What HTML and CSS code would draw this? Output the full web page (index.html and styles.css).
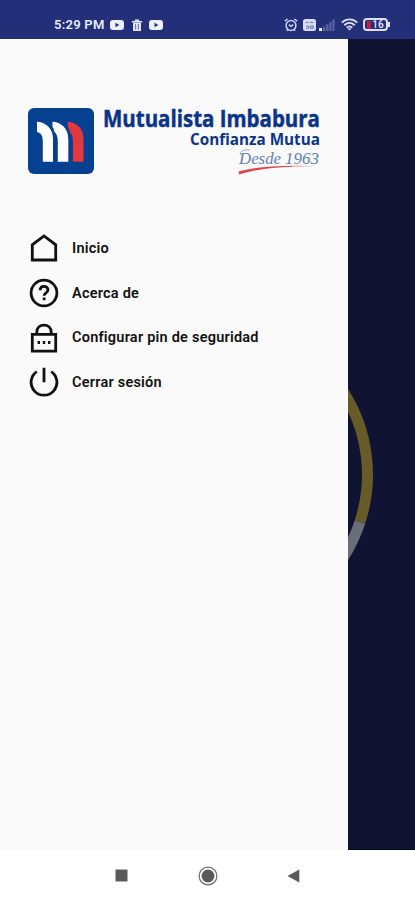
FILE: index.html
```html
<!DOCTYPE html>
<html lang="es">
	<head>
		<meta charset="utf-8">
		<meta name="viewport" content="width=device-width, initial-scale=1">
		<title>Mutualista Imbabura</title>
		<link rel="stylesheet" href="styles.css">
	</head>
	<body>
		<header class="status-bar">
			<div class="status-left">
				<span class="clock">5:29 PM</span>
				<svg class="video" width="14" height="12" viewBox="0 0 14 12">
					<rect x="0" y="1" width="14" height="10" rx="3" fill="#eef0ff"/>
					<path d="M5.5 3.8v4.4L9.3 6z" fill="#232f79"/>
				</svg>
				<svg class="trash" width="12" height="12" viewBox="0 0 12 12">
					<path d="M.8 2h3V.5h4.4V2h3v1.6H.8z" fill="#dfe3f8"/>
					<path d="M2 3.6h8V12H2z" fill="#dfe3f8"/>
					<path d="M4.6 5v5.5M7.4 5v5.5" stroke="#5c669f" stroke-width=".9"/>
				</svg>
				<svg class="video" width="14" height="12" viewBox="0 0 14 12">
					<rect x="0" y="1" width="14" height="10" rx="3" fill="#eef0ff"/>
					<path d="M5.5 3.8v4.4L9.3 6z" fill="#232f79"/>
				</svg>
			</div>
			<div class="status-right">
				<svg width="14" height="14" viewBox="0 0 14 14" fill="none" stroke="#cdd3f2" stroke-width="1.5">
					<circle cx="7" cy="7.5" r="4.9"/>
					<path d="M.8 3.2L3.6 1M13.2 3.2L10.4 1M2.8 12.8l1-1.2M11.2 12.8l-1-1.2"/>
					<path d="M4.8 6.6L7 8.4l2.3-1.8"/>
				</svg>
				<svg class="volte" width="13" height="12" viewBox="0 0 13 12">
					<rect width="13" height="12" rx="2.5" fill="#d9def6"/>
					<path d="M2.5 4.3l1.8-1.5 1.5 1.5M7 3.4h3.4M3 7h2.4v2.3H3M7.2 7h3v2.3h-3z" fill="none" stroke="#656fa8" stroke-width="1"/>
				</svg>
				<svg class="signal" width="16" height="12" viewBox="0 0 16 12">
					<path d="M0 9h3v3H0z" fill="#eef0ff"/>
					<path d="M4 7.5h2.4V12H4zM7.2 5.3h2.4V12H7.2zM10.4 3h2.2v9h-2.2zM13.4.5h2.2V12h-2.2z" fill="#59649f"/>
				</svg>
				<svg class="wifi" width="17" height="13" viewBox="0 0 17 13" fill="none" stroke="#d9def6" stroke-width="1.9">
					<path d="M.8 4.6c4.5-4.3 10.900-4.300 15.400 0M3.300 7.200c3.100-2.900 7.300-2.900 10.400 0M5.700 9.600c1.700-1.500 3.900-1.500 5.600 0"/>
					<path d="M6.300 10.200h4.400L8.500 12.600z" fill="#d9def6" stroke="none"/>
				</svg>
				<div class="battery"><span class="battery-level"></span>16</div>
			</div>
		</header>

		<main class="screen">
			<nav class="drawer">
				<div class="brand">
					<svg width="66" height="66" viewBox="0 0 66 66">
						<rect width="66" height="66" rx="6" fill="#064191"/>
						<path d="M9 13.700c8 .3 16 6 16 17.300v22.700H14.800V34c0-6-1.300-9-5.800-10z" fill="#fff"/>
						<path d="M24.500 13.700c8 .3 15.800 6 15.800 17.300v22.700H29.800V34c0-5-1-8-3.500-10.500-.2-2-.8-3-1.800-4.500z" fill="#fff"/>
						<path d="M39.800 13.700c8 .3 15.700 6 15.700 17.300v22.700H44.900V34c0-5-1-8-3.300-10.500-.2-2-.8-3-1.800-4.500z" fill="#e1373d"/>
					</svg>
					<svg class="brand-name" width="225" height="78" viewBox="0 -8 225 78">
						<text class="name" x="1" y="19" textLength="217" lengthAdjust="spacingAndGlyphs">Mutualista Imbabura</text>
						<text class="motto" x="88" y="37" textLength="130" lengthAdjust="spacingAndGlyphs">Confianza Mutua</text>
						<text class="since" x="137" y="56" textLength="42" lengthAdjust="spacingAndGlyphs">Desde</text>
						<text class="since" x="183" y="56" textLength="34" lengthAdjust="spacingAndGlyphs">1963</text>
						<path d="M139 47c-3-3 3-6 9-5" fill="none" stroke="#7f99bd" stroke-width=".8"/>
						<path d="M136.500 63.500c18-5 45-7 79-5-33-.5-58 1.500-78.500 8z" fill="#dc4650"/>
						<path d="M190 57.500l28 .5v3h-28z" fill="#fafafa" opacity=".5"/>
					</svg>
				</div>

				<ul class="menu">
					<li>
						<svg width="30" height="30" viewBox="0 0 30 30">
							<path d="M3.300 27V11.800L15 3l11.700 8.800V27z"/>
						</svg>
						<a href="#">Inicio</a>
					</li>
					<li>
						<svg width="30" height="30" viewBox="0 0 30 30">
							<circle cx="15" cy="15" r="12.900"/>
							<path d="M11.200 12.200c0-5 7.800-4.800 7.800-.4 0 3-3.900 3-3.900 6"/>
							<path d="M15.100 19.500v2.700"/>
						</svg>
						<a href="#">Acerca de</a>
					</li>
					<li>
						<svg width="30" height="30" viewBox="0 0 30 30">
							<path d="M3.300 11.300h23.400v16.900H3.300zM7.800 11V9.300c0-9.700 14.400-9.700 14.400 0V11"/>
							<path d="M8.600 19.500h2.400M13.800 19.500h2.400M19 19.500h2.400"/>
						</svg>
						<a href="#">Configurar pin de seguridad</a>
					</li>
					<li>
						<svg width="30" height="30" viewBox="0 0 30 30">
							<path d="M7.800 4.600A12.900 12.900 0 1 0 22.200 4.600M15 .8v14.400"/>
						</svg>
						<a href="#">Cerrar sesión</a>
					</li>
				</ul>
			</nav>

			<!-- Dimmed page behind the drawer -->
			<div class="backdrop">
				<svg width="67" height="811" viewBox="348 39 67 811" fill="none" stroke-width="11">
					<path d="M214.500 321.500a153 153 0 0 1 145.400 200.600" stroke="#665b29"/>
					<path d="M359.900 522.100a153 153 0 0 1-145.400 105.400" stroke="#6b6e78"/>
				</svg>
			</div>
		</main>

		<footer class="nav-bar">
			<svg width="13" height="13" viewBox="0 0 13 13"><path d="M.5.500h12v12H.5z"/></svg>
			<svg width="20" height="20" viewBox="0 0 20 20">
				<circle cx="10" cy="10" r="8.900" fill="none" stroke="#6b6b6b" stroke-width="1.200"/>
				<circle cx="10" cy="10" r="6.400"/>
			</svg>
			<svg width="13" height="14" viewBox="0 0 13 14"><path d="M.5 7L12.300.5v13z"/></svg>
		</footer>
	</body>
</html>
```

FILE: styles.css
```css
* {
	box-sizing: border-box;
}
body {
	margin: 0;
	height: 900px;
	display: flex;
	flex-direction: column;
	overflow: hidden;
	font-family: Roboto, "Liberation Sans", sans-serif;
	background: #fff;
}
svg {
	display: block;
	flex: none;
}

/*Phone status bar*/
.status-bar {
	height: 39px;
	padding: 10px 26px 0 54px;
	display: flex;
	justify-content: space-between;
	align-items: center;
	background: #232f79;
	color: #e9ecff;
}
.status-left, .status-right {
	display: flex;
	align-items: center;
}
.clock {
	width: 56px;
	font-size: 13px;
	font-weight: 600;
	letter-spacing: .25px;
	white-space: nowrap;
}
.trash {
	margin: 0 6px 0 7px;
}
.volte {
	margin: 0 3px 0 5px;
}
.wifi {
	margin: 0 5px 0 6px;
}
.battery {
	position: relative;
	display: flex;
	align-items: center;
	justify-content: center;
	width: 25px;
	height: 13px;
	margin-right: 1px;
	border: 2px solid #d9def6;
	border-radius: 4px;
	font-size: 10px;
	font-weight: 500;
	line-height: 9px;
}
.battery::after {
	content: "";
	position: absolute;
	right: -4px;
	top: 2px;
	width: 2px;
	height: 5px;
	background: #d9def6;
}
.battery-level {
	width: 4px;
	height: 8px;
	margin-right: 1px;
	background: #c51f37;
}

/*Drawer and what is left of the page*/
.screen {
	display: flex;
	height: 811px;
}
.drawer {
	width: 348px;
	padding: 69px 0 0 28px;
	background: #fafafa;
}
.backdrop {
	width: 67px;
	background: #101331;
	border-bottom: 1px solid #05071a;
	overflow: hidden;
}
.brand {
	display: flex;
	gap: 8px;
	height: 70px;
}
.brand-name {
	margin-top: -8px;
	overflow: visible;
}
.name, .motto {
	font-family: "Open Sans", "Noto Sans", sans-serif;
	font-weight: 700;
	fill: #0a3488;
}
.name {
	font-size: 23px;
	stroke: #0a3488;
	stroke-width: .5;
}
.motto {
	font-size: 15.500px;
}
.since {
	font-family: "Liberation Serif", serif;
	font-size: 16px;
	font-style: italic;
	fill: #627fae;
}

.menu {
	list-style-type: none;
	margin: 48px 0 0;
	padding: 0 0 0 1px;
}
.menu li {
	display: flex;
	align-items: center;
	gap: 14px;
	height: 44.7px;
}
.menu svg {
	fill: none;
	stroke: #111;
	stroke-width: 2.8;
}
.menu a {
	margin-left: -1px;
	color: #111;
	font-size: 14.5px;
	font-weight: 600;
	letter-spacing: .23px;
	text-decoration: none;
}

/*Android buttons*/
.nav-bar {
	height: 50px;
	padding: 1px 115px 0;
	display: flex;
	justify-content: space-between;
	align-items: center;
	fill: #5a5a5a;
}
```
